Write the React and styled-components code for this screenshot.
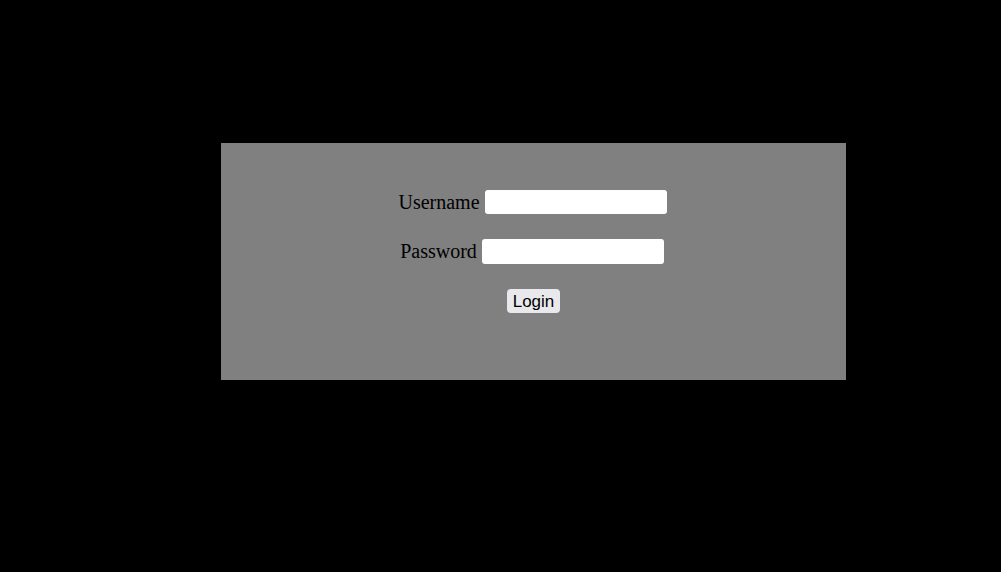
import React, { useState } from "react";
import styled, { createGlobalStyle } from "styled-components";

const GlobalStyle = createGlobalStyle`
  html, body {
    margin: 0;
    padding: 0;
    background: black;
  }
`;

const Page = styled.div`
  width: 1001px;
  height: 572px;
  background: black;
  padding: 143px 0 0 221px;
  box-sizing: border-box;
`;

const Panel = styled.div`
  width: 625px;
  height: 237px;
  background: #808080;
  box-sizing: border-box;
  padding-top: 47px;
  display: flex;
  flex-direction: column;
  align-items: center;
  gap: 25px;
`;

const Row = styled.div`
  display: flex;
  align-items: center;
  gap: 5px;
  height: ${(props) => props.tall || 24}px;
  margin-left: ${(props) => props.shift || 0}px;
`;

const Label = styled.label`
  font-family: "Liberation Serif", "Times New Roman", serif;
  font-size: 20px;
  color: black;
`;

const InputField = styled.input`
  width: 182px;
  height: ${(props) => props.tall || 24}px;
  box-sizing: border-box;
  border: none;
  border-radius: 3px;
  background: white;
  padding: 0 4px;
  font-size: 14px;
  outline: none;
`;

const LoginBtn = styled.button`
  height: 24px;
  margin-top: 0;
  padding: 0 6px;
  font-family: "Liberation Sans", Arial, sans-serif;
  font-size: 17px;
  line-height: 26px;
  color: black;
  background: #e9e9ed;
  border: none;
  border-radius: 4px;
  cursor: pointer;
`;

export default function App() {
  const [username, setUsername] = useState("");
  const [password, setPassword] = useState("");

  return (
    <>
      <GlobalStyle />
      <Page>
        <Panel>
          <Row shift={-2}>
            <Label>Username</Label>
            <InputField
              value={username}
              onChange={(e) => setUsername(e.target.value)}
            />
          </Row>
          <Row shift={-3} tall={25}>
            <Label>Password</Label>
            <InputField
              type="password"
              tall={25}
              value={password}
              onChange={(e) => setPassword(e.target.value)}
            />
          </Row>
          <LoginBtn>Login</LoginBtn>
        </Panel>
      </Page>
    </>
  );
}
